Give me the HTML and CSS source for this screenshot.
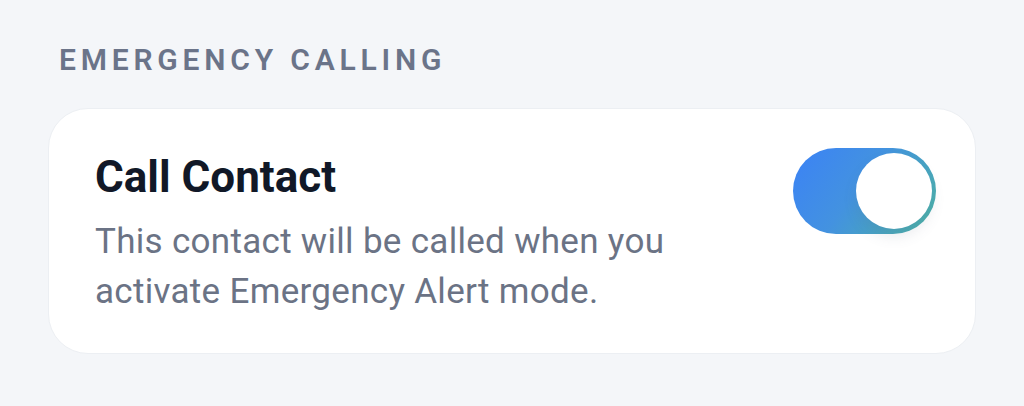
FILE: index.html
```html
<!DOCTYPE html>
<html lang="en">
<head>
<meta charset="utf-8">
<link rel="stylesheet" href="styles.css">
</head>
<body>
<main class="page">
  <h2 class="section-title">EMERGENCY CALLING</h2>
  <section class="card">
    <div class="card-text">
      <h3 class="card-title">Call Contact</h3>
      <p class="card-desc">This contact will be called when you activate Emergency Alert mode.</p>
    </div>
    <div class="toggle" role="switch" aria-checked="true">
      <span class="knob"></span>
    </div>
  </section>
</main>
</body>
</html>
```
FILE: styles.css
```css
* { box-sizing: border-box; }
html, body { margin: 0; padding: 0; }
body {
  background: #f4f6f9;
  font-family: Roboto, "Liberation Sans", sans-serif;
  width: 1024px;
  height: 406px;
  overflow: hidden;
}
.page {
  padding: 40px 48px 0 48px;
}
.section-title {
  margin: 0 0 0 11px;
  font-size: 30px;
  line-height: 40px;
  font-weight: 600;
  letter-spacing: 0.16em;
  color: #6b7489;
}
.card {
  margin-top: 28px;
  background: #ffffff;
  border-radius: 40px;
  border: 1px solid #eceff3;
  padding: 39px 39px 39px 46px;
  display: flex;
  justify-content: space-between;
  align-items: flex-start;
  height: 246px;
}
.card-title {
  margin: 0;
  font-size: 44px;
  line-height: 58px;
  font-weight: 700;
  color: #111827;
}
.card-desc {
  margin: 11px 0 0 0;
  font-size: 35px;
  line-height: 50px;
  font-weight: 400;
  letter-spacing: 0.3px;
  color: #6b7385;
  max-width: 640px;
}
.toggle {
  width: 143px;
  height: 86px;
  border-radius: 43px;
  background: linear-gradient(125deg, #3b82f6 0%, #4392e0 45%, #4cb5a3 100%);
  display: flex;
  align-items: center;
  justify-content: flex-end;
  padding: 0 4px;
  flex-shrink: 0;
}
.knob {
  width: 76px;
  height: 76px;
  border-radius: 50%;
  background: #ffffff;
  box-shadow: 0 8px 14px rgba(90, 100, 120, 0.12);
}
```
